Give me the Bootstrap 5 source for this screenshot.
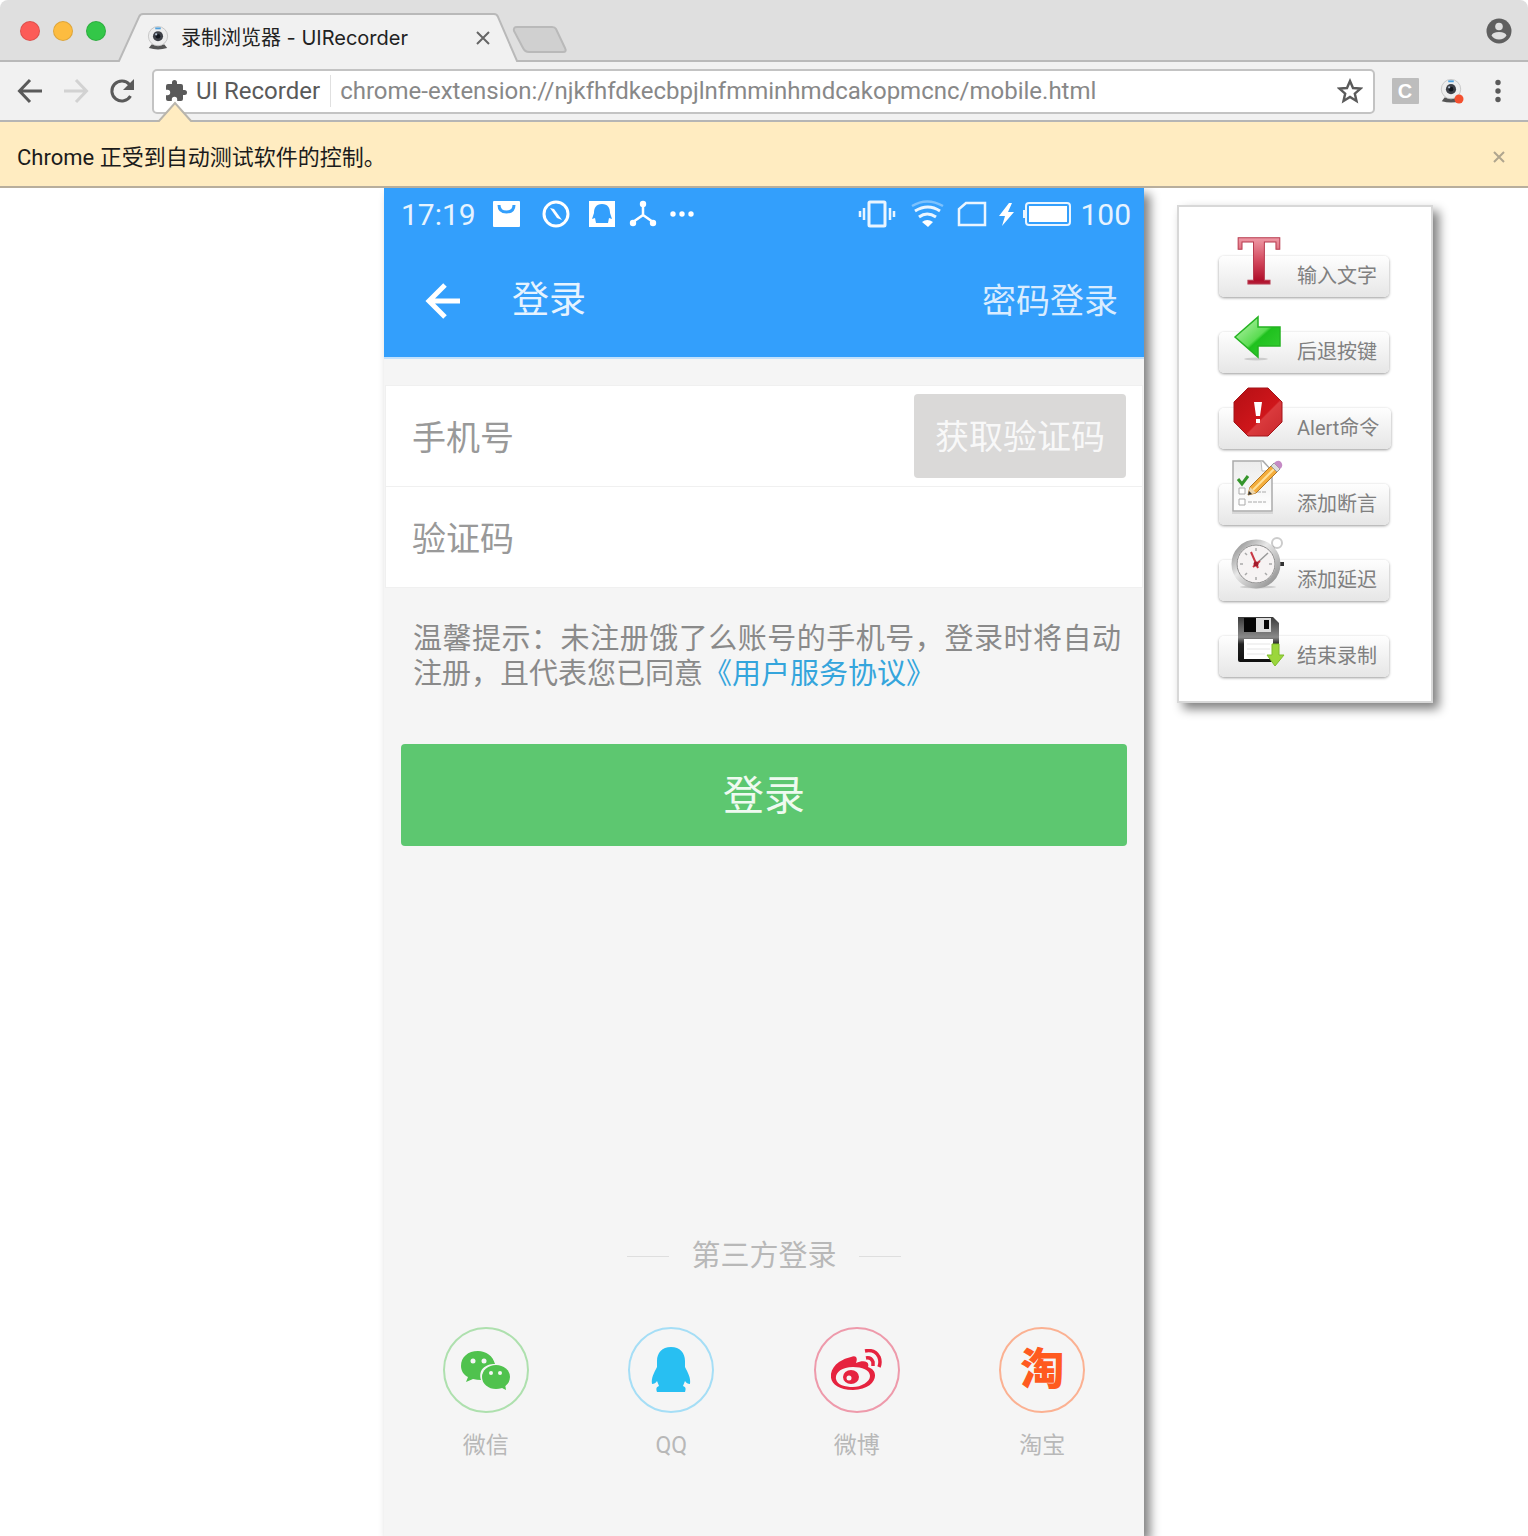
<!DOCTYPE html>
<html lang="zh-CN">
<head>
<meta charset="utf-8">
<meta name="viewport" content="width=device-width, initial-scale=1">
<title>录制浏览器 - UIRecorder</title>
<link href="https://cdn.jsdelivr.net/npm/bootstrap@5.3.0/dist/css/bootstrap.min.css" rel="stylesheet">
<style>
body { font-family: Roboto, "Noto Sans CJK SC", sans-serif; background: #fff; color: #222; }
button { font-family: inherit; }
svg { display: block; flex: none; }
.plain-btn { background: none; border: 0; padding: 0; color: #5f5f5f; }

/* browser frame */
.tab-strip { height: 62px; background: #dfdfdf; border-bottom: 2px solid #b9b9b9; border-radius: 8px 8px 0 0; padding: 2px 16px 0 20px; }
.lights { gap: 13px; }
.lights button { width: 20px; height: 20px; border-radius: 50%; border: 1px solid rgba(0,0,0,.12); padding: 0; }
.light-red { background: #fc5b57; } .light-yellow { background: #fdbc40; } .light-green { background: #33c748; }
.browser-tab { width: 404px; height: 62px; margin-left: 11px; padding: 13px 31px 0 30px; font-family: Inter, "Noto Sans CJK SC", sans-serif; font-size: 20px; }
.browser-tab > svg.tab-shape { position: absolute; left: 0; top: 0; z-index: 0; }
.browser-tab > * { position: relative; z-index: 1; }
.new-tab { margin: 16px 0 0 -9px; }
.toolbar-row { height: 60px; background: #f1f1f1; padding: 0 25px 0 17px; border-bottom: 2px solid #b5b5b5; }
.nav-icons { gap: 20px; }
.omnibox { height: 45px; margin-left: 17px; background: #fff; border: 2px solid #c3c3c3; border-radius: 5px; padding: 0 10px; font-size: 24px; }
.omnibox span { color: #5a5a5a; }
.omnibox input { border: 0; outline: 0; background: none; color: #888; padding: 0; min-width: 0; }
.omnibox .sep { width: 1px; height: 32px; background: #e0e0e0; margin: 0 9px 0 10px; }
.infobar { height: 66px; background: #ffecc1; border-bottom: 2px solid #b8ae9c; padding: 6px 19px 0 17px; font-size: 22px; color: #1b1b1b; }
.infobar > svg.pointer { position: absolute; left: 156px; top: -21px; }

/* page */
.stage { display: grid; grid-template-columns: 1fr minmax(0, 760px) 1fr; }
.phone { background: #f5f5f5; box-shadow: 6px 6px 10px #808080; padding-bottom: 76px; }
.phone-head { background: #339ffc; color: #e6f3ff; height: 171px; border-bottom: 2px solid #c3e1fc; }
.status-row { height: 53px; padding: 0 13px 0 17px; font-size: 30px; line-height: 36px; }
.head-row { height: 117px; padding: 2px 26px 0 41px; }
.head-row h1 { font-size: 37px; font-weight: 400; line-height: 48px; margin: 0 0 0 50px; }
.head-row a { font-size: 34px; line-height: 44px; color: #d9ecff; text-decoration: none; }
.fields { margin: 27px 2px 0; background: #fff; outline: 1px solid #f0f0f0; }
.field-row { height: 100px; padding: 0 16px 0 26px; }
.field-row + .field-row { border-top: 1px solid #f0f0f0; height: 101px; }
.field-row input { border: 0; outline: 0; background: none; font-size: 34px; padding: 4px 0 0; min-width: 0; }
.field-row input::placeholder { color: #999; opacity: 1; }
.code-btn { width: 212px; height: 84px; background: #dad9d8; color: #f8f8f8; border: 0; border-radius: 4px; font-size: 34px; padding: 3px 0 0; }
.tips { margin: 35px 23px 0 29px; font-size: 29px; line-height: 35px; color: #8a8a8a; text-align: justify; }
.tips a { color: #35a5dc; text-decoration: none; }
.login-btn { margin: 52px 17px 0; height: 102px; padding: 4px 0 0; background: #5dc770; color: #effaf0; border: 0; border-radius: 4px; font-size: 41px; }
.third-title { gap: 22px; font-size: 29px; line-height: 36px; color: #b8b8b8; }
.third-title i { width: 42px; height: 1px; background: #dedede; }
.socials { padding: 53px 9px 0; }
.socials a { width: 25%; gap: 19px; font-size: 23px; line-height: 28px; color: #b8b8b8; text-decoration: none; }
.ring { width: 86px; height: 86px; border: 2px solid; border-radius: 50%; }
.ring-wechat { border-color: #aee0ae; } .ring-qq { border-color: #a5def6; } .ring-weibo { border-color: #ee9aab; } .ring-taobao { border-color: #fbb192; }
.tao { color: #ff5a1f; font-size: 44px; font-weight: 900; line-height: 60px; }

/* command panel */
.commands { margin: 17px 0 0 33px; width: 256px; border: 2px solid #d8d8d8; background: #fff; box-shadow: 6px 6px 10px #808080; padding: 49px 0 24px 40px; gap: 35px; align-self: start; }
.cmd { border: 0; padding: 0 12px; height: 41px; gap: 10px; border-radius: 5px; background: linear-gradient(#fefefe, #e6e6e6); box-shadow: 0 1px 3px rgba(0,0,0,.4); font-size: 20px; line-height: 41px; color: #808080; }
.cmd svg { margin-top: -24px; overflow: visible; }
</style>
</head>
<body>
<svg width="0" height="0" class="position-absolute" aria-hidden="true">
  <defs>
    <symbol id="webcam" viewBox="0 0 24 26">
      <path d="M5 20h14l3 4q-10 3-20 0z" fill="#555"/>
      <circle cx="12" cy="11" r="10.500" fill="#ededed" stroke="#c4c4c4"/>
      <circle cx="12" cy="11" r="5.500" fill="#3d4047"/>
      <circle cx="12" cy="11" r="2.500" fill="#11151c"/>
      <circle cx="10" cy="9" r="1.200" fill="#b6c4d6"/>
      <path d="M9 2.500h6" stroke="#4da0dd" stroke-width="2"/>
    </symbol>
    <linearGradient id="gT" x1="0" y1="0" x2="0" y2="1"><stop offset="0.150" stop-color="#f2a3ae"/><stop offset=".5" stop-color="#d2475c"/><stop offset=".75" stop-color="#b00f2b"/><stop offset="1" stop-color="#c9606f"/></linearGradient>
    <linearGradient id="gArrow" x1="0" y1="0" x2="1" y2="1"><stop offset="0" stop-color="#c1f6b5"/><stop offset=".5" stop-color="#5bdc52"/><stop offset=".55" stop-color="#1fc11e"/><stop offset="1" stop-color="#38cf34"/></linearGradient>
    <linearGradient id="gStop" x1="0" y1="0" x2="1" y2="1"><stop offset="0" stop-color="#b40f14"/><stop offset=".6" stop-color="#cf161b"/><stop offset=".62" stop-color="#da3a3d"/><stop offset="1" stop-color="#c9282c"/></linearGradient>
    <linearGradient id="gRim" x1="0" y1="0" x2="1" y2="1"><stop offset="0" stop-color="#888"/><stop offset=".4" stop-color="#e8e8e8"/><stop offset="1" stop-color="#888"/></linearGradient>
    <linearGradient id="gDisk" x1="0" y1="0" x2="0" y2="1"><stop offset="0" stop-color="#3a3a3a"/><stop offset=".45" stop-color="#8a8a8a"/><stop offset=".6" stop-color="#222"/><stop offset="1" stop-color="#111"/></linearGradient>
    <linearGradient id="gPaper" x1="0" y1="0" x2="0" y2="1"><stop offset="0" stop-color="#ececec"/><stop offset="1" stop-color="#fff"/></linearGradient>
  </defs>
</svg>
<div class="d-flex flex-column min-vh-100">
  <header>
    <div class="tab-strip d-flex align-items-center">
      <div class="lights d-flex">
        <button class="light-red" aria-label="关闭"></button><button class="light-yellow" aria-label="最小化"></button><button class="light-green" aria-label="缩放"></button>
      </div>
      <div class="browser-tab position-relative d-flex align-items-center">
        <svg class="tab-shape" width="404" height="62" viewBox="0 0 404 62"><path d="M0 63V61H2L22 17q1-3 4-3H377q3 0 4 3L400 61h4v2z" fill="#f1f1f1"/><path d="M0 61H2L22 17q1-3 4-3H377q3 0 4 3L400 61h4" fill="none" stroke="#b9b9b9" stroke-width="2"/></svg>
        <svg width="22" height="24"><use href="#webcam"/></svg>
        <span class="ms-2 ps-1 text-nowrap">录制浏览器 - UIRecorder</span>
        <button class="plain-btn ms-auto" aria-label="关闭标签页"><svg width="14" height="14" viewBox="0 0 14 14"><path d="M1 1l12 12M13 1L1 13" stroke="#666" stroke-width="2"/></svg></button>
      </div>
      <button class="plain-btn new-tab" aria-label="新标签页"><svg width="56" height="29" viewBox="0 0 56 29"><path d="M5 2H40q3 0 4 2l9 19q2 4-2 4H17q-4 0-6-4L2 6Q1 2 5 2z" fill="#d0d0d0" stroke="#b9b9b9" stroke-width="2"/></svg></button>
      <button class="plain-btn ms-auto" aria-label="用户"><svg width="26" height="26" viewBox="0 0 26 26"><circle cx="13" cy="13" r="12.500" fill="#5f5f5f"/><circle cx="13" cy="8.500" r="3.800" fill="#dfdfdf"/><path d="M5.500 17.500q1-3.500 7.500-3.500t7.500 3.500Q18 21.500 13 21.500t-7.500-4z" fill="#dfdfdf"/></svg></button>
    </div>
    <div class="toolbar-row d-flex align-items-center">
      <div class="nav-icons d-flex">
        <button class="plain-btn" aria-label="后退"><svg width="26" height="26" viewBox="0 0 26 26" fill="none" stroke="#5a5a5a" stroke-width="3"><path d="M25 13H3M13 2L2.500 13 13 24"/></svg></button>
        <button class="plain-btn" aria-label="前进"><svg width="26" height="26" viewBox="0 0 26 26" fill="none" stroke="#d2d2d2" stroke-width="3"><path d="M1 13h22M13 2l10.500 11L13 24"/></svg></button>
        <button class="plain-btn" aria-label="刷新"><svg width="26" height="26" viewBox="0 0 26 26"><path d="M21.500 18A10 10 0 1 1 20.500 6.500" fill="none" stroke="#5a5a5a" stroke-width="3"/><path d="M25 1v11H14z" fill="#5a5a5a"/></svg></button>
      </div>
      <div class="omnibox d-flex align-items-center flex-grow-1">
        <svg width="24" height="24" viewBox="0 0 24 24"><path d="M20.500 11H19V7a2 2 0 0 0-2-2h-4V3.500a2.500 2.500 0 0 0-5 0V5H4a2 2 0 0 0-2 2v3.800h1.500a2.700 2.700 0 0 1 0 5.400H2V20a2 2 0 0 0 2 2h3.800v-1.500a2.700 2.700 0 0 1 5.400 0V22H17a2 2 0 0 0 2-2v-4h1.500a2.500 2.500 0 0 0 0-5z" fill="#5a5a5a"/></svg>
        <span class="text-nowrap ms-2">UI Recorder</span>
        <div class="sep"></div>
        <input class="flex-grow-1" type="text" aria-label="地址" value="chrome-extension://njkfhfdkecbpjlnfmminhmdcakopmcnc/mobile.html">
        <button class="plain-btn" aria-label="收藏"><svg width="26" height="26" viewBox="0 0 26 26"><path d="M13 3l3 7 7.500.600-5.700 5 1.700 7.400L13 19l-6.500 4 1.700-7.400-5.700-5L10 10z" fill="none" stroke="#5a5a5a" stroke-width="2.400"/></svg></button>
      </div>
      <div class="d-flex align-items-center ms-3">
        <button class="plain-btn" aria-label="扩展 C"><svg width="28" height="28" viewBox="0 0 28 28"><rect x="1" y="1" width="27" height="26" rx="1" fill="#bdbdbd"/><text x="14" y="21" text-anchor="middle" font-family="Liberation Sans, sans-serif" font-weight="700" font-size="20" fill="#fff">C</text></svg></button>
        <button class="plain-btn ms-3 ps-1" aria-label="UI Recorder"><svg width="26" height="26" viewBox="0 0 26 26"><use href="#webcam" width="24" height="24" x="0" y="1"/><circle cx="20" cy="21" r="4.500" fill="#f4502f"/></svg></button>
        <button class="plain-btn ms-4 ps-1" aria-label="菜单"><svg width="10" height="24" viewBox="0 0 10 24" fill="#5a5a5a"><circle cx="5" cy="3.500" r="2.700"/><circle cx="5" cy="12" r="2.700"/><circle cx="5" cy="20.500" r="2.700"/></svg></button>
      </div>
    </div>
    <div class="infobar position-relative d-flex align-items-center">
      <svg class="pointer" width="38" height="24" viewBox="0 0 38 24"><path d="M0 24L3 20 19 3 35 20l3 4z" fill="#ffecc1"/><path d="M1 20h2L19 2l16 18h2" fill="none" stroke="#b9b5ac" stroke-width="2"/></svg>
      <span>Chrome 正受到自动测试软件的控制。</span>
      <button class="plain-btn ms-auto me-1" aria-label="关闭提示"><svg width="12" height="12" viewBox="0 0 12 12"><path d="M1 1l10 10M11 1L1 11" stroke="#b0a58e" stroke-width="2"/></svg></button>
    </div>
  </header>

  <main class="stage flex-grow-1">
    <div></div>
    <section class="phone d-flex flex-column">
      <div class="phone-head">
        <div class="status-row d-flex align-items-center">
          <span>17:19</span>
          <svg class="ms-3" width="210" height="30" viewBox="2 1 210 30" fill="#fff">
            <rect x="3" y="2" width="27" height="26" rx="1"/><path d="M9 6q0 7 7.500 7T24 6" fill="none" stroke="#339ffc" stroke-width="3"/>
            <circle cx="66" cy="15" r="12" fill="none" stroke="#fff" stroke-width="3"/><path d="M60 9l4 1 8 11-5-2z"/>
            <rect x="99" y="2" width="26" height="26"/><path d="M112 5c-6 0-8 4-8 9l-2 6 3-1 1 5h12l1-5 3 1-2-6c0-5-2-9-8-9z" fill="#339ffc"/>
            <g stroke="#fff" stroke-width="2.500"><path d="M153 5v11l-10 7M153 16l10 7" fill="none"/></g><circle cx="153" cy="5" r="3.200"/><circle cx="143" cy="24" r="3.200"/><circle cx="163" cy="24" r="3.200"/>
            <circle cx="183" cy="15" r="2.700"/><circle cx="192" cy="15" r="2.700"/><circle cx="201" cy="15" r="2.700"/>
          </svg>
          <svg class="ms-auto me-2" width="216" height="30" viewBox="-2 1 216 30" fill="none" stroke="#eaf5ff" stroke-width="2.500">
            <rect x="11" y="3" width="16" height="24" rx="1" stroke-width="3"/><path d="M6 9v12M32 9v12M2 12v6M36 12v6"/>
            <path d="M54 7q15-9 31 0" opacity=".4"/><path d="M57 12q13-8 25 0M61 18q8-6 17 0" stroke-width="3"/><path d="M64 23q5-4 11 0l-5 5z" fill="#fff" stroke="none"/>
            <path d="M108 4h19v22h-26V10z"/>
            <path d="M151 4l-10 13h6l-3 10 12-14h-6l4-9z" fill="#fff" stroke="none"/>
            <rect x="168" y="4" width="44" height="22" rx="3" stroke-width="2"/><rect x="171" y="7" width="38" height="16" fill="#fff" stroke="none"/><path d="M166 11v8" stroke-width="2"/>
          </svg>
          <span>100</span>
        </div>
        <div class="head-row d-flex align-items-center">
          <button class="plain-btn" aria-label="返回"><svg width="37" height="36" viewBox="0 0 37 36"><path d="M35 18H5M20 2L4 18l16 16" fill="none" stroke="#fff" stroke-width="5"/></svg></button>
          <h1>登录</h1>
          <a class="ms-auto" href="#">密码登录</a>
        </div>
      </div>
      <div class="fields">
        <div class="field-row d-flex align-items-center"><input class="flex-grow-1" type="tel" aria-label="手机号" placeholder="手机号"><button class="code-btn">获取验证码</button></div>
        <div class="field-row d-flex align-items-center"><input class="flex-grow-1" type="text" aria-label="验证码" placeholder="验证码"></div>
      </div>
      <p class="tips">温馨提示：未注册饿了么账号的手机号，登录时将自动注册，且代表您已同意<a href="#">《用户服务协议》</a></p>
      <button class="login-btn">登录</button>
      <div class="third-title d-flex align-items-center justify-content-center mt-auto"><i></i><span>第三方登录</span><i></i></div>
      <div class="socials d-flex">
        <a href="#" class="d-flex flex-column align-items-center"><span class="ring ring-wechat d-flex align-items-center justify-content-center">
          <svg width="52" height="42" viewBox="0 0 52 42"><path d="M18 2C8 2 1 8 1 17c0 5 3 9 7 11l-2 5 7-3q4 1 8 1C18 21 25 15 35 15 33 7 26 2 18 2z" fill="#50c24e"/><ellipse cx="36" cy="28" rx="14" ry="12" fill="#50c24e"/><path d="M40 38l6 3-1-6z" fill="#50c24e"/><g fill="#f5f5f5"><circle cx="13" cy="12" r="2.500"/><circle cx="24" cy="12" r="2.500"/><circle cx="31" cy="24" r="2"/><circle cx="40" cy="24" r="2"/></g></svg></span>微信</a>
        <a href="#" class="d-flex flex-column align-items-center"><span class="ring ring-qq d-flex align-items-center justify-content-center">
          <svg width="40" height="46" viewBox="0 0 40 46"><path d="M20 0C11 0 6 6 6 14v6C3 26 0 31 1 37c2 0 4-1 5-3l2 5c-3 1-3 3-2 6h28c1-3 1-5-2-6l2-5c1 2 3 3 5 3 1-6-2-11-5-17v-6C34 6 29 0 20 0z" fill="#28bff2"/></svg></span>QQ</a>
        <a href="#" class="d-flex flex-column align-items-center"><span class="ring ring-weibo d-flex align-items-center justify-content-center">
          <svg width="52" height="42" viewBox="0 0 52 42"><path fill-rule="evenodd" d="M20 8c5-2 7 1 5 6 7-3 14-2 12 4 13 4 8 23-15 23C-4 41-5 22 8 13q6-4 12-5zM22 18C10 18 4 24 5 30s9 8 17 8 17-5 17-11-8-9-17-9z" fill="#e6233f"/><ellipse cx="20" cy="28" rx="8" ry="7" fill="#e6233f"/><circle cx="18" cy="29" r="2.500" fill="#f5f5f5"/><path d="M34 2q10-2 14 6 2 5 0 10M35 9q5-1 7 4v4" fill="none" stroke="#e6233f" stroke-width="3.500"/></svg></span>微博</a>
        <a href="#" class="d-flex flex-column align-items-center"><span class="ring ring-taobao d-flex align-items-center justify-content-center"><span class="tao">淘</span></span>淘宝</a>
      </div>
    </section>

    <aside class="commands d-flex flex-column align-items-start">
      <button class="cmd d-flex"><svg width="56" height="56" viewBox="0 0 56 56"><text x="28" y="52" text-anchor="middle" font-family="DejaVu Serif Condensed, DejaVu Serif, serif" font-stretch="condensed" font-weight="700" font-size="64" fill="url(#gT)" stroke="#b83c50">T</text></svg>输入文字</button>
      <button class="cmd d-flex"><svg width="56" height="56" viewBox="0 0 56 56"><ellipse cx="25" cy="51" rx="12" ry="1.500" fill="#ccc"/><path d="M4 29L27 9v10h22v19H27v11z" fill="url(#gArrow)" stroke="#25b322" stroke-width="1.500"/></svg>后退按键</button>
      <button class="cmd d-flex"><svg width="56" height="56" viewBox="0 0 56 56"><path d="M17 4h20l14 14v20L37 52H17L3 38V18z" fill="url(#gStop)" stroke="#a3151a"/><path d="M23 18h8l-2 14h-4zM25 35h4v4h-4z" fill="#fff"/></svg>Alert命令</button>
      <button class="cmd d-flex"><svg width="56" height="56" viewBox="0 0 56 56"><path d="M2 1h30l9 10v40H2z" fill="url(#gPaper)" stroke="#aaa" stroke-width="1.500"/><path d="M1 53h41" stroke="#999" opacity=".5"/><path d="M30 1l1 10h9" fill="#fff" stroke="#bbb"/><path d="M7 19l4 5 6-8" fill="none" stroke="#35952b" stroke-width="3"/><path d="M8 28h6v6H8zM8 39h6v6H8z" fill="#fff" stroke="#aaa"/><path d="M17 42h18M26 32h9" stroke="#aaa" stroke-dasharray="4 1"/><path d="M17 35l2-8L41 5l6 6-22 22z" fill="#f4ad3c" stroke="#b27722"/><path d="M22 30L43 9" stroke="#ffe19b" stroke-width="2"/><path d="M17 35l2-8 6 6z" fill="#ecd5ac"/><path d="M17 35l1-4 3 3z" fill="#333"/><path d="M40 6l3-3 6 6-3 3z" fill="#ddd" stroke="#999"/><path d="M43 3q4-4 7-1 3 4-1 7z" fill="#c58ac5"/></svg>添加断言</button>
      <button class="cmd d-flex"><svg width="56" height="56" viewBox="0 0 56 56"><ellipse cx="27" cy="51" rx="18" ry="1.500" fill="#ccc"/><circle cx="46" cy="7" r="5" fill="none" stroke="#ccc" stroke-width="2"/><path d="M39 14l4-3" stroke="#999" stroke-width="4"/><path d="M49 26h4v4h-4z" fill="#333"/><circle cx="25" cy="28" r="22" fill="#f6f3f3" stroke="url(#gRim)" stroke-width="5"/><circle cx="25" cy="28" r="19" fill="none" stroke="#888"/><path d="M25 12v3M25 41v3M9 28h3M38 28h3M14 17l2 2M14 39l2-2M36 39l-2-2" stroke="#aaa" stroke-width="1.500"/><path d="M25 28L37 17" stroke="#999" stroke-width="1.500"/><path d="M20 16l7 16M22 31l7-6" stroke="#c93845" stroke-width="2"/><circle cx="25" cy="28" r="2.500" fill="#a21b2b"/></svg>添加延迟</button>
      <button class="cmd d-flex"><svg width="56" height="56" viewBox="0 0 56 56"><path d="M7 5h35l6 6v37q0 2-2 2H9q-2 0-2-2z" fill="url(#gDisk)"/><path d="M13 6h27v14H13z" fill="#ddd"/><path d="M13 6h12v14H13zM33 8h5v9h-5z" fill="#050505"/><path d="M13 27h29v20H13z" fill="#fff"/><path d="M16 32h23M16 37h23M16 42h18" stroke="#e5e5e5"/><path d="M41 32h7v11h5L44 54 36 43h5z" fill="#9bd63c" stroke="#7ebc2c"/></svg>结束录制</button>
    </aside>
  </main>
</div>
<script src="https://cdn.jsdelivr.net/npm/bootstrap@5.3.0/dist/js/bootstrap.bundle.min.js"></script>
</body>
</html>
